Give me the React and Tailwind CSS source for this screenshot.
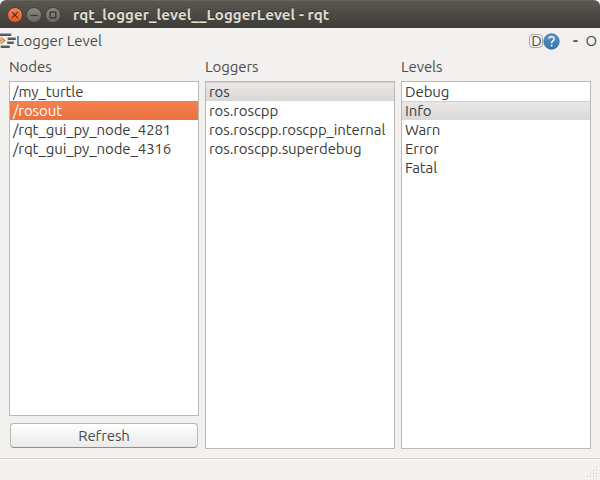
import React from "react";

const FONT = "font-['Ubuntu','Noto_Sans',sans-serif]";

function TitleButton({ close, children }) {
  return (
    <span
      className={
        "flex h-[16px] w-[16px] items-center justify-center rounded-full border " +
        (close
          ? "border-[#5b3a2b] bg-linear-to-b from-[#f58454] to-[#e5531f]"
          : "border-[#45433d] bg-linear-to-b from-[#8a887f] to-[#6b6961]")
      }
    >
      <svg width="8" height="8" viewBox="0 0 8 8" fill="none" stroke="#33322c" strokeWidth="1.2">
        {children}
      </svg>
    </span>
  );
}

function Row({ text, state }) {
  const look =
    state === "active"
      ? "bg-linear-to-b from-[#f58152] to-[#e9703f] text-white outline-1 outline-dotted -outline-offset-1 outline-[#a09484]"
      : state === "current"
        ? "bg-linear-to-b from-[#eae9e8] to-[#d9d8d6] text-[#3c3c3c] shadow-[inset_0_1px_0_#d3d1cf]"
        : "text-[#3c3c3c]";
  return (
    <li className={"flex h-[19px] items-center pl-[3px] " + look}>
      <span className="whitespace-pre pt-px leading-[18px]">{text}</span>
    </li>
  );
}

function Column({ title, children, footer }) {
  return (
    <section className="flex w-[190px] flex-col">
      <h2 className="h-[27px] leading-[26px] text-[#4c4c4c]">{title}</h2>
      <ul className="flex-1 border border-[#bcb8b4] bg-white">{children}</ul>
      {footer}
    </section>
  );
}

function LoggerIcon() {
  const bars = [[-1, 0, 12.5], [7.5, 4, 8.5], [7, 8, 7], [0.5, 12, 9.5]];
  return (
    <svg width="16" height="16" viewBox="0 0 16 16" className="shrink-0">
      <defs>
        <linearGradient id="bar" x1="0" y1="0" x2="0" y2="1">
          <stop offset="0" stopColor="#a0a2a1" />
          <stop offset="0.45" stopColor="#6a6d6c" />
          <stop offset="0.75" stopColor="#1f2221" />
          <stop offset="1" stopColor="#1f2221" />
        </linearGradient>
      </defs>
      {bars.map(([x, y, w]) => (
        <rect key={y} x={x} y={y + 0.2} width={w} height="2.6" rx="1.1" fill="url(#bar)" />
      ))}
      <path d="M0.6 4.5L4.6 7.6L0.6 10.7" fill="none" stroke="#e27a1c" strokeWidth="1.4" />
      <path d="M-0.5 6.2L1.5 7.6L-0.5 9" fill="none" stroke="#e27a1c" strokeWidth="1.1" />
    </svg>
  );
}

function Grip() {
  const dots = [[9, 0], [6, 3], [9, 3], [3, 6], [6, 6], [9, 6], [0, 9], [3, 9], [6, 9], [9, 9]];
  return (
    <svg width="12" height="12" viewBox="0 0 12 12" shapeRendering="crispEdges">
      {dots.map(([x, y]) => (
        <g key={x + "-" + y}>
          <rect x={x + 1} y={y + 1} width="1" height="1" fill="#fff" />
          <rect x={x} y={y} width="1" height="1" fill="#c9c6c2" />
        </g>
      ))}
    </svg>
  );
}

export default function App() {
  return (
    <div className={"flex h-[480px] w-[600px] flex-col overflow-hidden bg-[#f2f1f0] text-[15px] tracking-[-0.1px] " + FONT}>
      <div className="bg-white">
        <header className="flex h-[28px] items-center gap-[3px] rounded-t-[6px] border-t border-[#66645c] bg-linear-to-b from-[#595750] to-[#3d3c37] pl-[7px]">
          <TitleButton close>
            <path d="M1.2 1.2L6.8 6.8M6.8 1.2L1.2 6.8" />
          </TitleButton>
          <TitleButton>
            <path d="M0.5 4.5H7.5" />
          </TitleButton>
          <TitleButton>
            <path d="M1.2 1.2H6.8V6.8H1.2Z" />
          </TitleButton>
          <h1 className="ml-[9px] whitespace-pre pt-px text-[15px] font-bold tracking-[0.1px] text-[#dfdbd2] [text-shadow:0_-1px_0_#33322d]">
            rqt_logger_level__LoggerLevel - rqt
          </h1>
        </header>
      </div>

      <div className="flex h-[26px] items-center text-[#4c4c4c]">
        <LoggerIcon />
        <span className="whitespace-pre tracking-[-0.05px]">Logger Level</span>
        <div className="ml-auto flex items-center pr-[3px]">
          <span className="flex h-[14px] w-[14px] items-center justify-center rounded-[4px] border border-[#aaa6a1] pb-[2px] leading-none">
            D
          </span>
          <svg width="17" height="17" viewBox="0 0 17 17">
            <defs>
              <linearGradient id="help" x1="0" y1="0" x2="0" y2="1">
                <stop offset="0" stopColor="#5a97cb" />
                <stop offset="1" stopColor="#3873ad" />
              </linearGradient>
            </defs>
            <circle cx="8.5" cy="8.5" r="7.7" fill="url(#help)" stroke="#2f659b" strokeWidth="0.8" />
            <path d="M6 5.8C6.1 2.9 11.2 3 11.1 6C11 7.9 8.5 8 8.5 10.3" fill="none" stroke="#fff" strokeWidth="1.4" />
            <rect x="7.7" y="11.7" width="1.7" height="1.7" fill="#fff" />
          </svg>
          <span className="ml-[12px] w-[6px] text-center font-bold">-</span>
          <span className="ml-[7px]">O</span>
        </div>
      </div>

      <main className="flex h-[395px] gap-[6px] pl-[9px]">
        <Column
          title="Nodes"
          footer={
            <button className="mx-px mt-[7px] mb-px h-[25px] rounded-[4px] border border-[#bbb8b4] border-b-[#8f8c88] bg-linear-to-b from-white to-[#ebeae9] pt-px leading-[22px] text-[#4c4c4c]">
              Refresh
            </button>
          }
        >
          <Row text="/my_turtle" />
          <Row text="/rosout" state="active" />
          <Row text="/rqt_gui_py_node_4281" />
          <Row text="/rqt_gui_py_node_4316" />
        </Column>
        <Column title="Loggers">
          <Row text="ros" state="current" />
          <Row text="ros.roscpp" />
          <Row text="ros.roscpp.roscpp_internal" />
          <Row text="ros.roscpp.superdebug" />
        </Column>
        <Column title="Levels">
          <Row text="Debug" />
          <Row text="Info" state="current" />
          <Row text="Warn" />
          <Row text="Error" />
          <Row text="Fatal" />
        </Column>
      </main>

      <footer className="mt-[9px] flex flex-1 items-end justify-end border-t border-[#d3d0cd] pr-px pb-px shadow-[inset_0_1px_0_#fff]">
        <Grip />
      </footer>
    </div>
  );
}
